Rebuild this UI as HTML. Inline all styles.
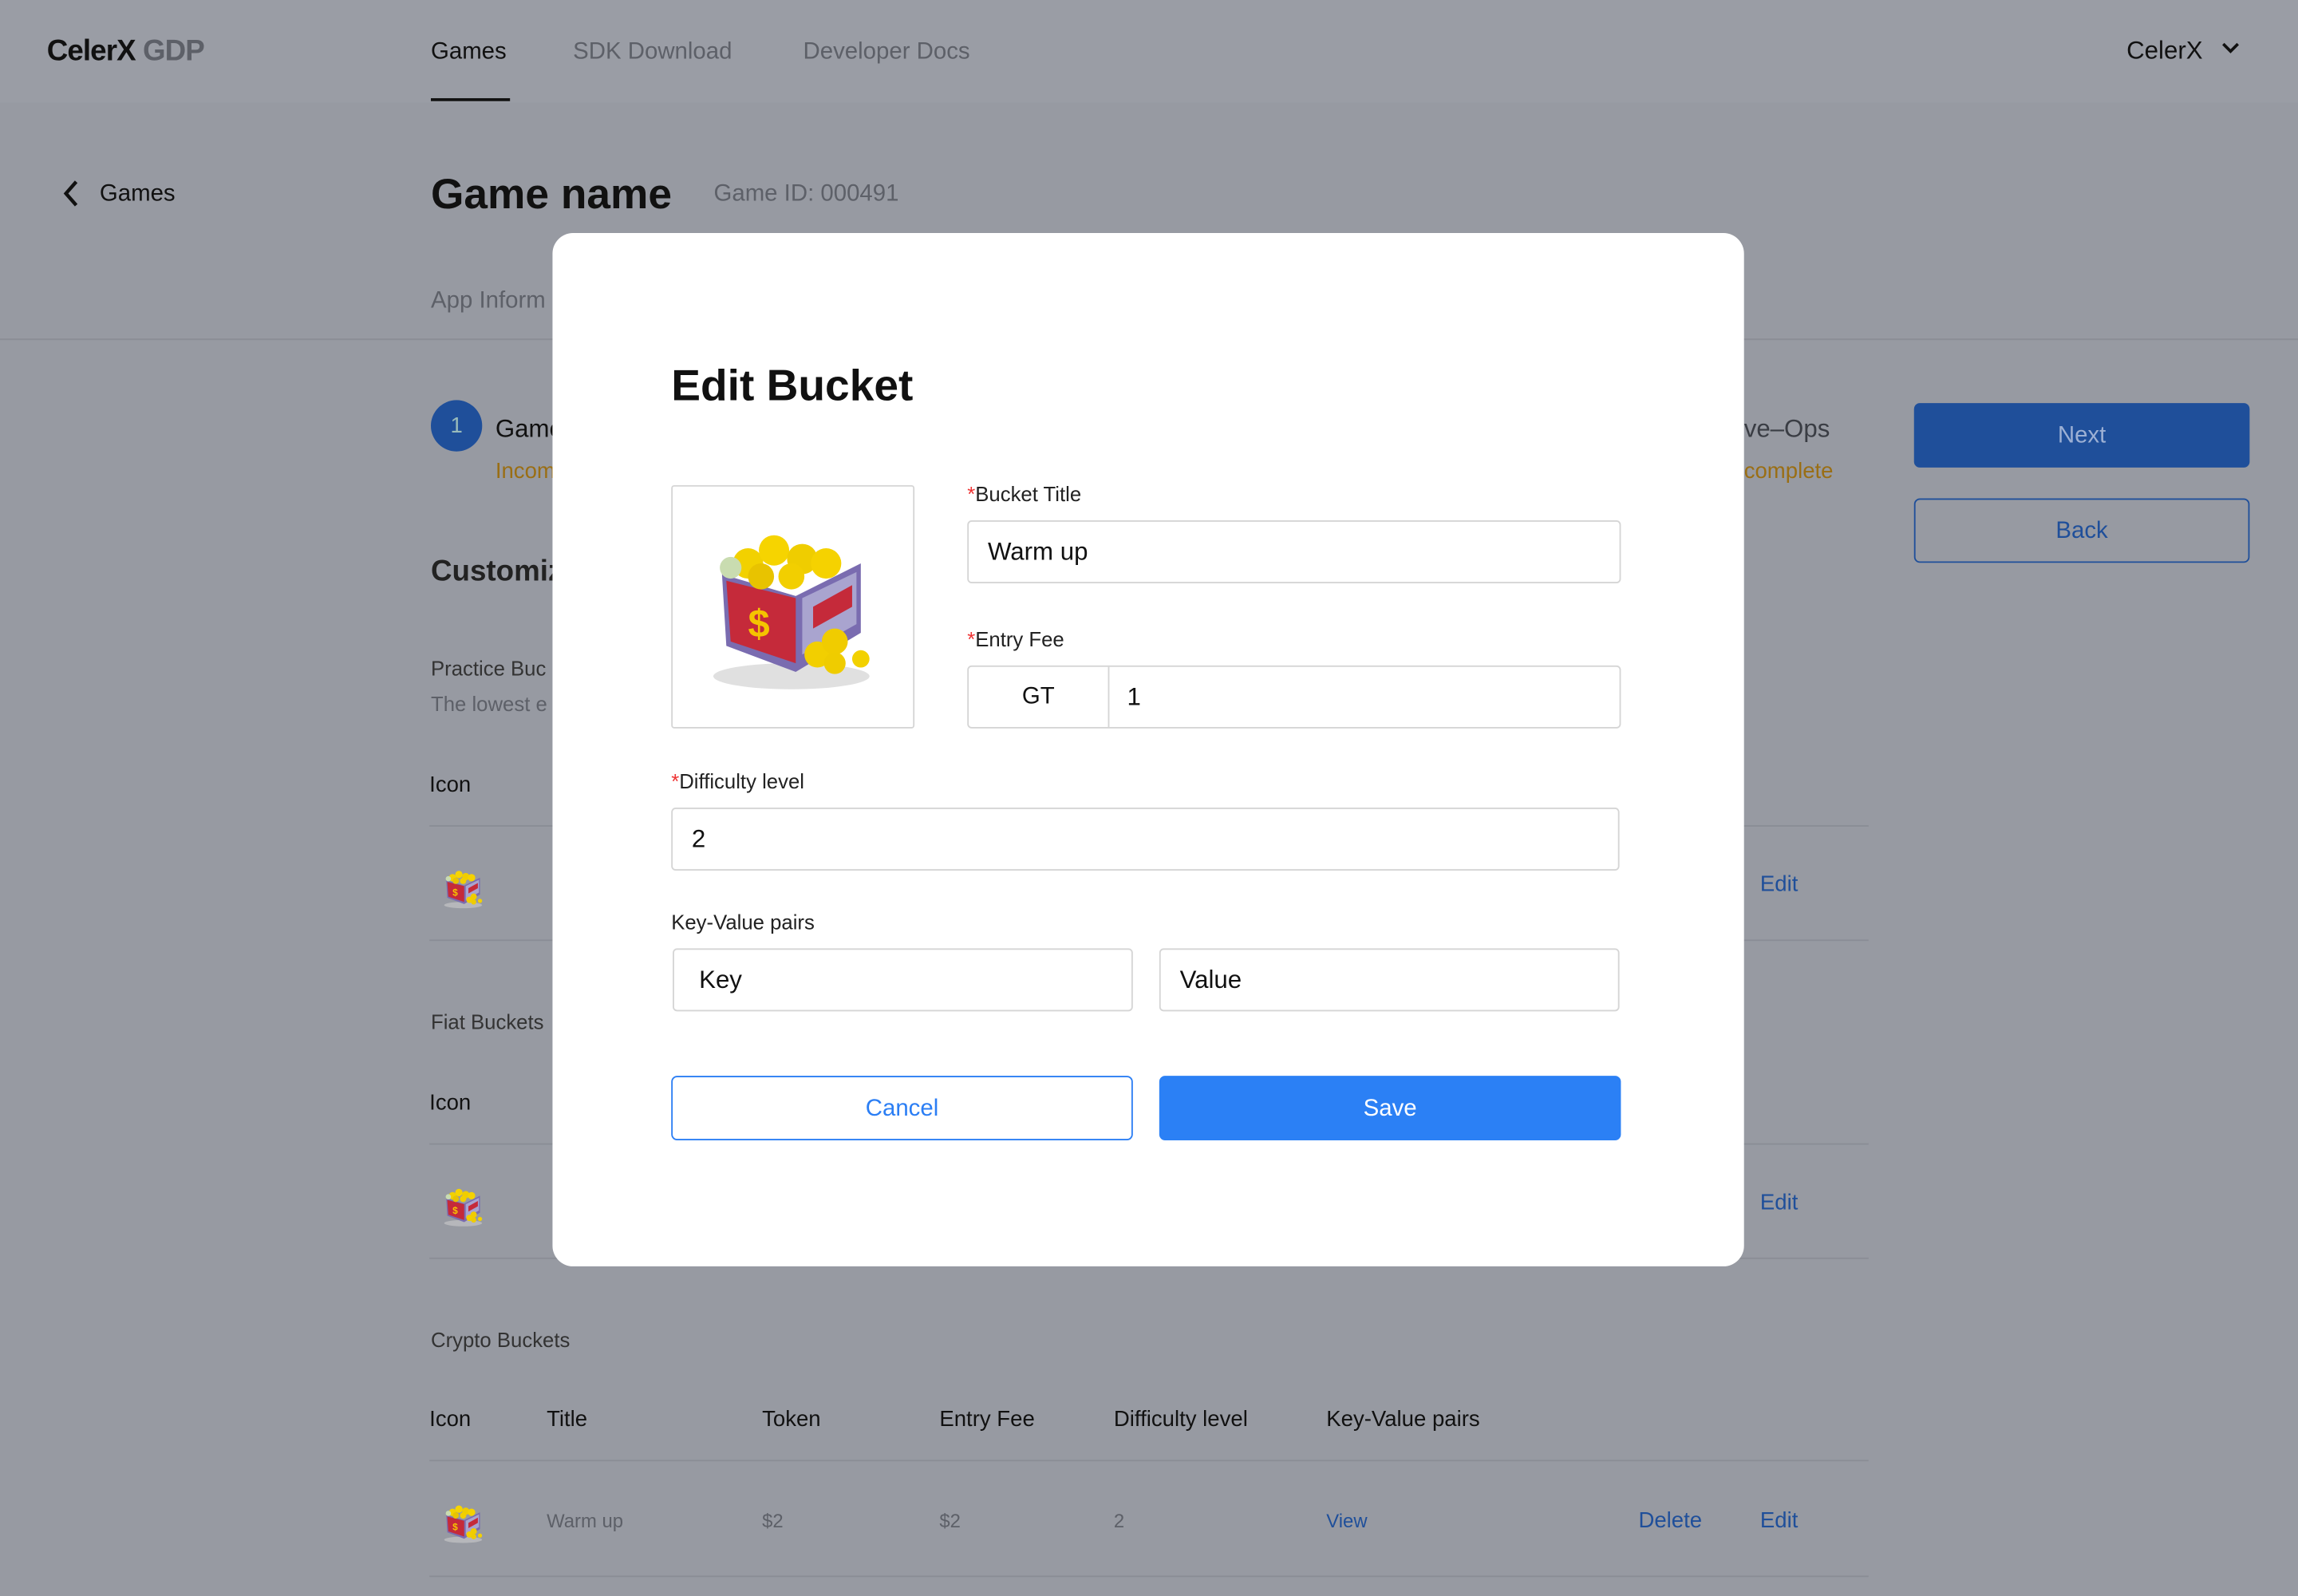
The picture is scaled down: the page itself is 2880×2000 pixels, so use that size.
<!DOCTYPE html>
<html><head><meta charset="utf-8"><style>
html,body{margin:0;padding:0;width:2880px;height:2000px;overflow:hidden;background:#979aa2;}
#s{position:absolute;left:0;top:0;width:1568px;height:1089px;transform:scale(1.83673);transform-origin:0 0;font-family:"Liberation Sans",sans-serif;color:#111;}
.a{position:absolute;white-space:nowrap;}
.hdr{position:absolute;left:0;top:0;width:1568px;height:70px;background:#9a9da5;}
.g{color:#5d6068}
.blue{color:#1f4f9a}
.ln{position:absolute;left:293px;width:982px;height:1px;background:#8a8d95;}
.modal{position:absolute;left:377px;top:159px;width:813px;height:705px;background:#fff;border-radius:14px;}
.inp{position:absolute;border:1px solid #d5d5d5;border-radius:3px;background:#fff;font-size:17px;box-sizing:border-box;padding-left:13px;display:flex;align-items:center;}
.lbl{position:absolute;font-size:14px;color:#222;}
.lbl b{color:#e33;font-weight:normal}
</style></head><body><div id="s">
<div class="hdr"></div>
<div class="a" style="left:32px;top:24px;font-size:20px;font-weight:bold;letter-spacing:-0.5px">CelerX <span style="color:#5d6068">GDP</span></div>
<div class="a" style="left:294px;top:27px;font-size:16px">Games</div>
<div class="a" style="left:294px;top:67px;width:54px;height:2px;background:#111"></div>
<div class="a g" style="left:391px;top:27px;font-size:16px">SDK Download</div>
<div class="a g" style="left:548px;top:27px;font-size:16px">Developer Docs</div>
<div class="a" style="left:1451px;top:25px;font-size:17px">CelerX</div>
<svg class="a" style="left:1514px;top:26px" width="16" height="14"><path d="M3 4l5 5 5-5" stroke="#111" stroke-width="2" fill="none"/></svg>
<svg class="a" style="left:42px;top:122px" width="14" height="20"><path d="M10 2L3 10l7 8" stroke="#111" stroke-width="2.4" fill="none"/></svg>
<div class="a" style="left:68px;top:124px;font-size:16px">Games</div>
<div class="a" style="left:294px;top:117px;font-size:29px;font-weight:bold">Game name</div>
<div class="a g" style="left:487px;top:124px;font-size:16px">Game ID: 000491</div>
<div class="a g" style="left:294px;top:197px;font-size:16px">App Inform</div>
<div class="a" style="left:0;top:231px;width:1568px;height:1px;background:#8a8d95"></div>
<div class="a" style="left:294px;top:273px;width:35px;height:35px;border-radius:50%;background:#1f4f9a;color:#9bb;font-size:15px;text-align:center;line-height:35px">1</div>
<div class="a" style="left:338px;top:283px;font-size:17px">Game</div>
<div class="a" style="left:338px;top:313px;font-size:15px;color:#9a6e14">Incom</div>
<div class="a" style="left:1190px;top:283px;font-size:17px;color:#3a3d44">ve–Ops</div>
<div class="a" style="left:1190px;top:313px;font-size:15px;color:#9a6e14">complete</div>
<div class="a" style="left:1306px;top:275px;width:229px;height:44px;background:#1f4f9a;border-radius:4px;color:#9cb0d4;font-size:16px;text-align:center;line-height:46px">Next</div>
<div class="a" style="left:1306px;top:340px;width:227px;height:42px;border:1px solid #1f4f9a;border-radius:4px;color:#1f4f9a;font-size:16px;text-align:center;line-height:44px">Back</div>
<div class="a" style="left:294px;top:379px;font-size:20px;font-weight:bold;color:#222">Customiz</div>
<div class="a" style="left:294px;top:448px;font-size:14px;color:#333">Practice Buc</div>
<div class="a g" style="left:294px;top:472px;font-size:14px">The lowest e</div>
<div class="a" style="left:293px;top:527px;font-size:15px">Icon</div>
<div class="ln" style="top:563px"></div>
<div class="a blue" style="left:1201px;top:595px;font-size:15px">Edit</div>
<div class="ln" style="top:641px"></div>
<div class="a" style="left:294px;top:689px;font-size:14px;color:#333">Fiat Buckets</div>
<div class="a" style="left:293px;top:744px;font-size:15px">Icon</div>
<div class="ln" style="top:780px"></div>
<div class="a blue" style="left:1201px;top:812px;font-size:15px">Edit</div>
<div class="ln" style="top:858px"></div>
<div class="a" style="left:294px;top:906px;font-size:14px;color:#333">Crypto Buckets</div>
<div class="a" style="left:293px;top:960px;font-size:15px">Icon</div>
<div class="a" style="left:373px;top:960px;font-size:15px">Title</div>
<div class="a" style="left:520px;top:960px;font-size:15px">Token</div>
<div class="a" style="left:641px;top:960px;font-size:15px">Entry Fee</div>
<div class="a" style="left:760px;top:960px;font-size:15px">Difficulty level</div>
<div class="a" style="left:905px;top:960px;font-size:15px">Key-Value pairs</div>
<div class="ln" style="top:996px"></div>
<div class="a g" style="left:373px;top:1030px;font-size:13px">Warm up</div>
<div class="a g" style="left:520px;top:1030px;font-size:13px">$2</div>
<div class="a g" style="left:641px;top:1030px;font-size:13px">$2</div>
<div class="a g" style="left:760px;top:1030px;font-size:13px">2</div>
<div class="a blue" style="left:905px;top:1030px;font-size:13px">View</div>
<div class="a blue" style="left:1118px;top:1029px;font-size:15px">Delete</div>
<div class="a blue" style="left:1201px;top:1029px;font-size:15px">Edit</div>
<div class="ln" style="top:1075px"></div>
<svg width="0" height="0" style="position:absolute"><defs><g id="cart">
<ellipse cx="50" cy="82" rx="36" ry="6" fill="#ccc" opacity=".6"/>
<path d="M18 35 L52 45 L82 30 L82 62 L52 80 L20 68 Z" fill="#7a6cb0"/>
<path d="M20 38 L52 46 L52 76 L22 66 Z" fill="#c52a3a"/>
<path d="M55 46 L80 34 L80 58 L55 72 Z" fill="#a9a4cf"/>
<path d="M60 50 L78 40 L78 50 L60 60 Z" fill="#c52a3a"/>
<text x="30" y="64" font-size="18" font-weight="bold" fill="#f5c400" font-family="Liberation Sans">$</text>
<circle cx="30" cy="30" r="7" fill="#f2d100"/><circle cx="42" cy="24" r="7" fill="#f6d400"/><circle cx="55" cy="28" r="7" fill="#efcd00"/><circle cx="66" cy="30" r="7" fill="#f5d200"/><circle cx="36" cy="36" r="6" fill="#e8c300"/><circle cx="50" cy="36" r="6" fill="#f2cf00"/><circle cx="22" cy="32" r="5" fill="#c9dcb0"/>
<circle cx="62" cy="72" r="6" fill="#f2cf00"/><circle cx="70" cy="66" r="6" fill="#f0cc00"/><circle cx="70" cy="76" r="5" fill="#efcc00"/><circle cx="82" cy="74" r="4" fill="#f2d100"/>
</g></defs></svg>
<svg class="a" style="left:298px;top:588px" width="36" height="36" viewBox="0 0 100 100"><use href="#cart"/></svg>
<svg class="a" style="left:298px;top:805px" width="36" height="36" viewBox="0 0 100 100"><use href="#cart"/></svg>
<svg class="a" style="left:298px;top:1021px" width="36" height="36" viewBox="0 0 100 100"><use href="#cart"/></svg>

<div class="modal"></div>
<div class="a" style="left:458px;top:247px;font-size:30px;font-weight:bold">Edit Bucket</div>
<div class="a" style="left:458px;top:331px;width:164px;height:164px;border:1px solid #d5d5d5;border-radius:2px"></div>
<svg class="a" style="left:466px;top:340px" width="148" height="148" viewBox="0 0 100 100"><use href="#cart"/></svg>
<div class="lbl" style="left:660px;top:329px"><b>*</b>Bucket Title</div>
<div class="inp" style="left:660px;top:355px;width:446px;height:43px">Warm up</div>
<div class="lbl" style="left:660px;top:428px"><b>*</b>Entry Fee</div>
<div class="inp" style="left:660px;top:454px;width:446px;height:43px;padding:0"><div style="width:95px;height:100%;border-right:1px solid #d5d5d5;display:flex;align-items:center;justify-content:center;font-size:16px">GT</div><div style="padding-left:12px">1</div></div>
<div class="lbl" style="left:458px;top:525px"><b>*</b>Difficulty level</div>
<div class="inp" style="left:458px;top:551px;width:647px;height:43px">2</div>
<div class="lbl" style="left:458px;top:621px">Key-Value pairs</div>
<div class="inp" style="left:459px;top:647px;width:314px;height:43px;padding-left:17px">Key</div>
<div class="inp" style="left:791px;top:647px;width:314px;height:43px">Value</div>
<div class="a" style="left:458px;top:734px;width:313px;height:42px;border:1px solid #2b7ef4;border-radius:4px;color:#2b7ef4;font-size:16px;text-align:center;line-height:44px">Cancel</div>
<div class="a" style="left:791px;top:734px;width:315px;height:44px;background:#2b80f5;border-radius:4px;color:#fff;font-size:16px;text-align:center;line-height:46px">Save</div>
</div></body></html>
